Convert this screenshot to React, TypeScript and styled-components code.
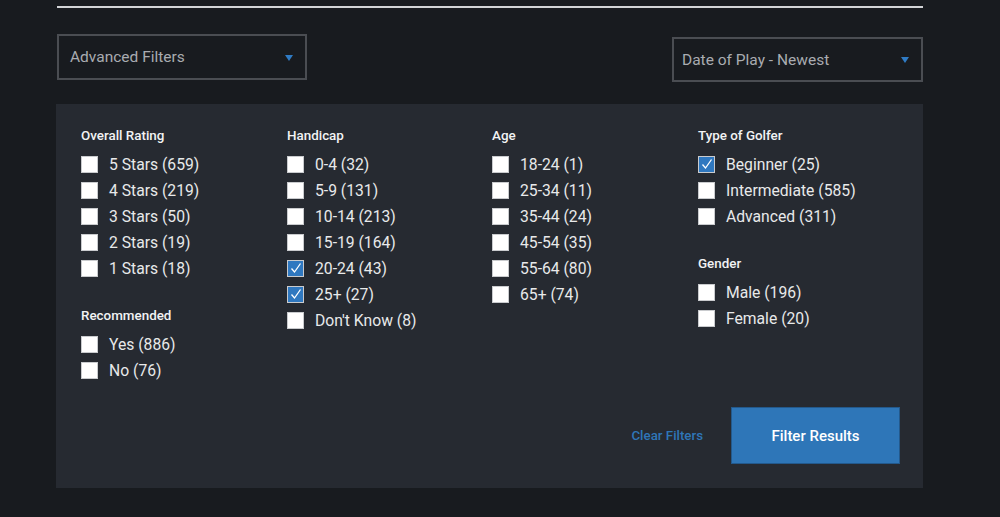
import styled, { createGlobalStyle } from 'styled-components'

type Option = { label: string; checked?: boolean }
type Group = { title: string; options: Option[] }

const columns: Group[][] = [
  [
    {
      title: 'Overall Rating',
      options: [
        { label: '5 Stars (659)' },
        { label: '4 Stars (219)' },
        { label: '3 Stars (50)' },
        { label: '2 Stars (19)' },
        { label: '1 Stars (18)' },
      ],
    },
    {
      title: 'Recommended',
      options: [{ label: 'Yes (886)' }, { label: 'No (76)' }],
    },
  ],
  [
    {
      title: 'Handicap',
      options: [
        { label: '0-4 (32)' },
        { label: '5-9 (131)' },
        { label: '10-14 (213)' },
        { label: '15-19 (164)' },
        { label: '20-24 (43)', checked: true },
        { label: '25+ (27)', checked: true },
        { label: "Don't Know (8)" },
      ],
    },
  ],
  [
    {
      title: 'Age',
      options: [
        { label: '18-24 (1)' },
        { label: '25-34 (11)' },
        { label: '35-44 (24)' },
        { label: '45-54 (35)' },
        { label: '55-64 (80)' },
        { label: '65+ (74)' },
      ],
    },
  ],
  [
    {
      title: 'Type of Golfer',
      options: [
        { label: 'Beginner (25)', checked: true },
        { label: 'Intermediate (585)' },
        { label: 'Advanced (311)' },
      ],
    },
    {
      title: 'Gender',
      options: [{ label: 'Male (196)' }, { label: 'Female (20)' }],
    },
  ],
]

const App = () => {
  return (
    <Page>
      <GlobalStyle />
      <Rule />
      <SelectRow>
        <Select $width={250} $height={46} $pad={11}>
          <SelectText>Advanced Filters</SelectText>
          <Arrow />
        </Select>
        <Select $width={251} $height={45} $offset={3} $pad={8}>
          <SelectText>Date of Play - Newest</SelectText>
          <Arrow />
        </Select>
      </SelectRow>
      <Panel>
        <Grid>
          {columns.map((col, i) => (
            <Column key={i}>
              {col.map((group) => (
                <FilterGroup key={group.title}>
                  <Heading>{group.title}</Heading>
                  {group.options.map((opt) => (
                    <Row key={opt.label}>
                      <Box $checked={!!opt.checked}>
                        {opt.checked && (
                          <svg width="14" height="14" viewBox="0 0 14 14">
                            <path d="M2.5 7.5 L5.5 11 L11.5 2.5" fill="none" stroke="#fff" strokeWidth="1.3" />
                          </svg>
                        )}
                      </Box>
                      <Label>{opt.label}</Label>
                    </Row>
                  ))}
                </FilterGroup>
              ))}
            </Column>
          ))}
        </Grid>
        <Footer>
          <ClearLink>Clear Filters</ClearLink>
          <Button>Filter Results</Button>
        </Footer>
      </Panel>
    </Page>
  )
}

export default App

const GlobalStyle = createGlobalStyle`
  html, body {
    margin: 0;
    padding: 0;
    background: #181b1f;
    font-family: Roboto, "Liberation Sans", sans-serif;
  }
`

const Page = styled.div`
  width: 867px;
  margin-left: 56px;
  padding-top: 6px;
  height: 511px;
`

const Rule = styled.div`
  height: 2px;
  margin-left: 1px;
  background: #d2d4d6;
`

const SelectRow = styled.div`
  display: flex;
  justify-content: space-between;
  align-items: flex-start;
  margin-top: 26px;
  padding-left: 1px;
`

const Select = styled.div<{ $width: number; $height: number; $offset?: number; $pad: number }>`
  box-sizing: border-box;
  width: ${(p) => p.$width}px;
  height: ${(p) => p.$height}px;
  margin-top: ${(p) => p.$offset || 0}px;
  border: 2px solid #4a4d52;
  display: flex;
  align-items: center;
  justify-content: space-between;
  padding: 0 12px 0 ${(p) => p.$pad}px;
`

const SelectText = styled.span`
  color: #a9acb1;
  font-size: 15.5px;
`

const Arrow = styled.span`
  width: 0;
  height: 0;
  border-left: 4.5px solid transparent;
  border-right: 4.5px solid transparent;
  border-top: 6px solid #2f7bc4;
  margin-top: 1px;
`

const Panel = styled.div`
  margin-top: 22px;
  background: #262a31;
  padding: 23px 23px 24px 25px;
  display: flex;
  flex-direction: column;
`

const Grid = styled.div`
  display: grid;
  grid-template-columns: 206px 205px 206px 1fr;
`

const Column = styled.div`
  display: flex;
  flex-direction: column;
  gap: 26px;
`

const FilterGroup = styled.div`
  display: flex;
  flex-direction: column;
`

const Heading = styled.div`
  color: #f2f3f4;
  font-size: 13.4px;
  font-weight: 500;
  line-height: 18px;
  margin-bottom: 6px;
`

const Row = styled.div`
  display: flex;
  align-items: center;
  height: 26px;
`

const Box = styled.span<{ $checked: boolean }>`
  box-sizing: border-box;
  width: 17px;
  height: 17px;
  border: 1px solid #c9cbce;
  background: ${(p) => (p.$checked ? '#2f78c0' : '#ffffff')};
  display: flex;
  align-items: center;
  justify-content: center;
  margin-right: 11px;
`

const Label = styled.span`
  color: #e8e9ea;
  font-size: 15.7px;
`

const Footer = styled.div`
  display: flex;
  justify-content: flex-end;
  align-items: center;
  margin-top: 24px;
`

const ClearLink = styled.span`
  color: #2f76b8;
  font-size: 13.3px;
  font-weight: 500;
  margin-right: 28px;
`

const Button = styled.div`
  box-sizing: border-box;
  width: 169px;
  height: 57px;
  background: #2e76b8;
  border: 1px solid #23598c;
  color: #ffffff;
  font-size: 15px;
  font-weight: 500;
  display: flex;
  align-items: center;
  justify-content: center;
`
